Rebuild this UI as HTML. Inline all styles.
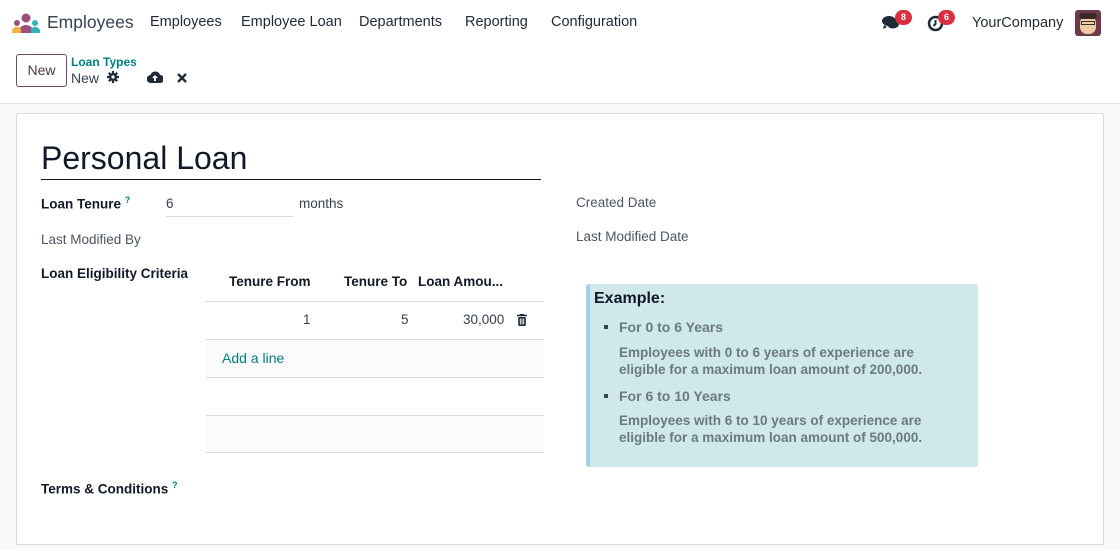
<!DOCTYPE html>
<html><head><meta charset="utf-8"><style>
*{box-sizing:border-box;margin:0;padding:0}
body{width:1120px;height:550px;overflow:hidden;background:#f9fafb;font-family:"Liberation Sans",sans-serif;color:#374151;font-size:13px;position:relative}
.abs{position:absolute;white-space:nowrap}
.top{position:absolute;left:0;top:0;width:1120px;height:104px;background:#fff;border-bottom:1px solid #dee2e6}
.nav{font-size:14.5px;color:#1f2937;top:14px}
.card{position:absolute;left:16px;top:113px;width:1088px;height:432px;background:#fff;border:1px solid #d8dadd;border-radius:2px}
.lbl{font-weight:bold;color:#111827;font-size:13.5px}
.badge{position:absolute;background:#d9303f;color:#fff;font-size:9px;font-weight:bold;border-radius:8px;width:17px;height:15px;text-align:center;line-height:15px}
.row{position:absolute;left:206px;width:338px;border-top:1px solid #d8dadd}
</style></head><body>
<div class="top"></div>
<svg class="abs" style="left:12px;top:13px" width="28" height="20" viewBox="0 0 28 20">
<circle cx="14" cy="5" r="4.5" fill="#9b4f7f"/><path d="M6 20 a8 8 0 0 1 16 0z" fill="#9b4f7f"/>
<circle cx="5" cy="10" r="3" fill="#9b4f7f"/><circle cx="23" cy="10" r="3" fill="#34b3be"/>
<path d="M0 20 a5 5 0 0 1 9 -4 v4z" fill="#f5b042"/><path d="M19 16 a5 5 0 0 1 9 4 h-9z" fill="#34b3be"/></svg>
<div class="abs" style="left:47px;top:12px;font-size:17.5px;color:#374151">Employees</div>
<div class="abs nav" style="left:150px">Employees</div>
<div class="abs nav" style="left:241px">Employee Loan</div>
<div class="abs nav" style="left:359px">Departments</div>
<div class="abs nav" style="left:465px">Reporting</div>
<div class="abs nav" style="left:551px">Configuration</div>
<svg class="abs" style="left:882px;top:15px" width="18" height="16" viewBox="0 0 18 16"><ellipse cx="7" cy="6" rx="7" ry="5" fill="#1f2937"/><ellipse cx="11" cy="9" rx="6" ry="4.5" fill="#1f2937"/><path d="M2 10 l-1 4 4-2z" fill="#1f2937"/></svg>
<div class="badge" style="left:895px;top:10px">8</div>
<svg class="abs" style="left:927px;top:15px" width="17" height="17" viewBox="0 0 17 17"><circle cx="8.5" cy="8.5" r="6.5" fill="none" stroke="#1f2937" stroke-width="2.5"/><path d="M8.5 5v4l-2 2" stroke="#1f2937" stroke-width="2" fill="none"/></svg>
<div class="badge" style="left:938px;top:10px">6</div>
<div class="abs" style="left:972px;top:15px;font-size:14.5px;color:#1f2937">YourCompany</div>
<div class="abs" style="left:1075px;top:10px;width:26px;height:26px;border-radius:3px;background:#6b3b4c;overflow:hidden"><div style="position:absolute;left:5px;top:6px;width:16px;height:18px;border-radius:7px;background:#f1c9a4"></div><div style="position:absolute;left:4px;top:3px;width:18px;height:6px;background:#3a2a22;border-radius:4px"></div><div style="position:absolute;left:6px;top:11px;width:14px;height:4px;border:1px solid #333"></div></div>
<div class="abs" style="left:16px;top:54px;width:51px;height:33px;border:1px solid #714b67;border-radius:3px;text-align:center;line-height:31px;font-size:14px;color:#4b3b46">New</div>
<div class="abs" style="left:71px;top:55px;font-size:12px;font-weight:bold;color:#017e84">Loan Types</div>
<div class="abs" style="left:71px;top:70px;font-size:14px;color:#374151">New</div>
<svg class="abs" style="left:107px;top:71px" width="12" height="12" viewBox="0 0 12 12"><circle cx="6" cy="6" r="4" fill="#1f2937"/><g stroke="#1f2937" stroke-width="2.2"><path d="M6 0v12M0 6h12M1.8 1.8l8.4 8.4M10.2 1.8l-8.4 8.4"/></g><circle cx="6" cy="6" r="1.6" fill="#fff"/></svg>
<svg class="abs" style="left:147px;top:71px" width="16" height="12" viewBox="0 0 16 12"><path d="M4 12a4 4 0 0 1-.5-8A5 5 0 0 1 13 4a3.5 3.5 0 0 1 0 8z" fill="#1f2937"/><path d="M8 4l-3 3h2v3h2V7h2z" fill="#fff"/></svg>
<svg class="abs" style="left:177px;top:73px" width="10" height="10" viewBox="0 0 10 10"><path d="M1 1l8 8M9 1l-8 8" stroke="#1f2937" stroke-width="2.4"/></svg>
<div class="card"></div>
<div class="abs" style="left:41px;top:140px;font-size:32px;color:#111827">Personal Loan</div>
<div class="abs" style="left:41px;top:179px;width:500px;border-top:1px solid #111827"></div>
<div class="abs lbl" style="left:41px;top:195px">Loan Tenure <sup style="color:#017e84;font-size:9px">?</sup></div>
<div class="abs" style="left:166px;top:196px;font-size:13.5px">6</div>
<div class="abs" style="left:166px;top:216px;width:127px;border-top:1px solid #d8dadd"></div>
<div class="abs" style="left:299px;top:196px;font-size:13.5px">months</div>
<div class="abs" style="left:41px;top:232px;color:#4b5563;font-size:13.5px">Last Modified By</div>
<div class="abs" style="left:576px;top:195px;color:#4b5563;font-size:13.5px">Created Date</div>
<div class="abs" style="left:576px;top:229px;color:#4b5563;font-size:13.5px">Last Modified Date</div>
<div class="abs lbl" style="left:41px;top:266px">Loan Eligibility Criteria</div>
<div class="abs lbl" style="left:229px;top:274px">Tenure From</div>
<div class="abs lbl" style="left:344px;top:274px">Tenure To</div>
<div class="abs lbl" style="left:418px;top:274px">Loan Amou...</div>
<div class="row" style="top:301px;height:38px"></div>
<div class="abs" style="left:303px;top:312px;font-size:13.5px">1</div>
<div class="abs" style="left:401px;top:312px;font-size:13.5px">5</div>
<div class="abs" style="left:463px;top:312px;font-size:13.5px">30,000</div>
<svg class="abs" style="left:517px;top:314px" width="10" height="12" viewBox="0 0 10 12"><path d="M0 1.5h10M3.5 1.5V0h3v1.5" stroke="#1f2937" stroke-width="1.4" fill="none"/><rect x="1.2" y="3" width="7.6" height="9" rx="1" fill="#1f2937"/><path d="M3.3 4.5v6M5 4.5v6M6.7 4.5v6" stroke="#fff" stroke-width=".9"/></svg>
<div class="row" style="top:339px;height:38px;background:#fbfbfb"></div>
<div class="abs" style="left:222px;top:350px;font-size:14px;color:#017e84">Add a line</div>
<div class="row" style="top:377px;height:38px"></div>
<div class="row" style="top:415px;height:38px;background:#fbfbfb;border-bottom:1px solid #d8dadd"></div>
<div class="abs lbl" style="left:41px;top:480px">Terms &amp; Conditions <sup style="color:#017e84;font-size:9px">?</sup></div>
<div class="abs" style="left:586px;top:284px;width:392px;height:183px;background:#cfe8ec;border-left:4px solid #9cd3dc;border-radius:3px"></div>
<div class="abs" style="left:594px;top:290px;font-size:16px;font-weight:bold;color:#111827">Example:</div>
<div class="abs" style="left:604px;top:325px;width:4px;height:4px;background:#374151"></div>
<div class="abs" style="left:619px;top:319px;font-weight:bold;color:#6b7a80;font-size:14px">For 0 to 6 Years</div>
<div class="abs" style="left:619px;top:344px;font-weight:bold;color:#6b7a80;font-size:13.5px;line-height:17px">Employees with 0 to 6 years of experience are<br>eligible for a maximum loan amount of 200,000.</div>
<div class="abs" style="left:604px;top:394px;width:4px;height:4px;background:#374151"></div>
<div class="abs" style="left:619px;top:388px;font-weight:bold;color:#6b7a80;font-size:14px">For 6 to 10 Years</div>
<div class="abs" style="left:619px;top:412px;font-weight:bold;color:#6b7a80;font-size:13.5px;line-height:17px">Employees with 6 to 10 years of experience are<br>eligible for a maximum loan amount of 500,000.</div>
</body></html>
